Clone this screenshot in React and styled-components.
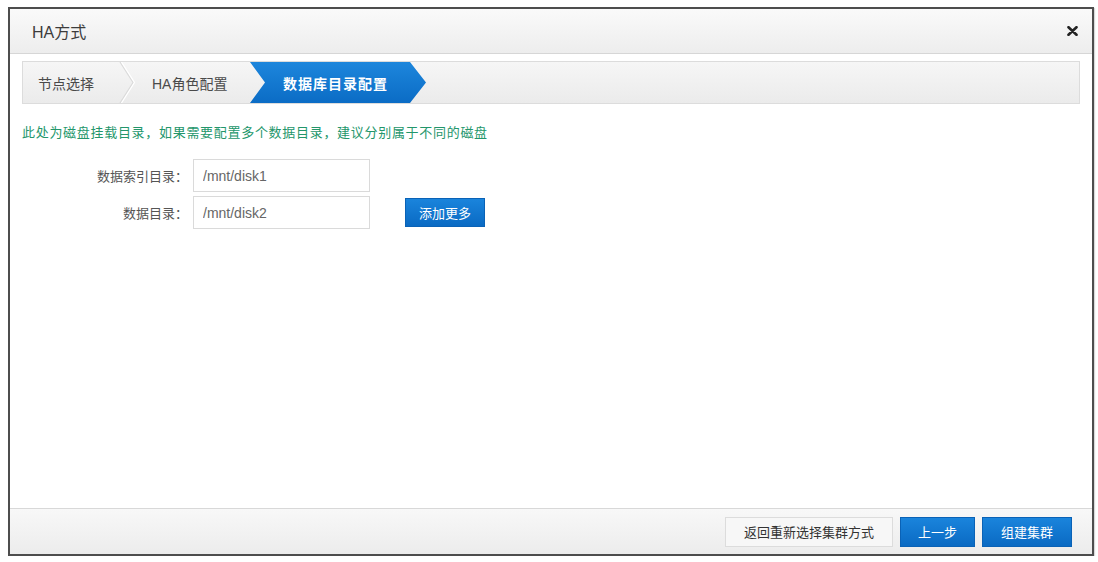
import React from 'react';
import styled, { createGlobalStyle } from 'styled-components';

const GlobalStyle = createGlobalStyle`
    html, body {
        margin: 0;
        padding: 0;
        background: #ffffff;
    }
    body {
        font-family: "Liberation Sans", "Noto Sans CJK SC", sans-serif;
        color: #444;
    }
    * {
        box-sizing: border-box;
    }
`;

const Page = styled.div`
    padding: 7px 0 0 8px;
`;

const Dialog = styled.div`
    display: flex;
    flex-direction: column;

    width: 1086px;
    height: 549px;

    background: #ffffff;
    border: 2px solid #4d4d4d;
    box-shadow: 1px 1px 1px rgba(0,0,0,.15);
`;

const Header = styled.div`
    display: flex;
    align-items: center;
    justify-content: space-between;

    height: 45px;
    padding: 0 13px 0 22px;

    background: linear-gradient(#fafafa, #ededed);
    border-bottom: 1px solid #d6d6d6;
`;

const Title = styled.h1`
    margin: 0;
    font-size: 16px;
    font-weight: normal;
    color: #3c3c3c;
`;

const CloseButton = styled.button`
    display: flex;
    align-items: center;
    justify-content: center;

    width: 14px;
    height: 14px;
    padding: 0;

    background: none;
    border: none;
    cursor: pointer;
`;

const Body = styled.div`
    flex: 1;
    padding: 7px 12px 0 12px;
`;

const StepBar = styled.div`
    display: flex;
    align-items: stretch;

    height: 43px;

    background: linear-gradient(#f6f6f6, #ebebeb);
    border: 1px solid #dcdcdc;
`;

const Step = styled.div`
    display: flex;
    align-items: center;

    width: ${p => p.$width}px;
    padding-left: ${p => p.$pad}px;

    font-size: 14px;
    color: #4a4a4a;
    white-space: nowrap;
`;

const ActiveStep = styled.div`
    display: flex;
    align-items: center;

    width: 176px;
    padding-left: 33px;

    font-size: 14px;
    font-weight: bold;
    letter-spacing: 1px;
    color: #ffffff;
    white-space: nowrap;

    background: linear-gradient(#1d86dc, #0b6cc5);
    clip-path: polygon(0 0, 160px 0, 176px 50%, 160px 100%, 0 100%, 15px 50%);
`;

const Separator = styled.svg`
    flex: none;
    width: 18px;
    height: 41px;
`;

const Hint = styled.p`
    margin: 21px 0 0 0;
    font-size: 13px;
    line-height: 16px;
    letter-spacing: 0.7px;
    color: #23966b;
`;

const Form = styled.div`
    display: grid;
    grid-template-columns: 166px 177px 1fr;
    row-gap: 4px;
    column-gap: 5px;

    margin-top: 18px;
`;

const Label = styled.label`
    grid-column: 1;
    grid-row: ${p => p.$row};
    align-self: center;

    text-align: right;
    font-size: 13px;
    color: #555;
`;

const Input = styled.input`
    grid-column: 2;
    grid-row: ${p => p.$row};
    height: 33px;
    padding: 0 9px;

    font-family: "Liberation Sans", sans-serif;
    font-size: 14px;
    color: #666;

    background: #fff;
    border: 1px solid #dadada;
    outline: none;
`;

const BlueButton = styled.button`
    height: ${p => p.$height || 30}px;
    padding: 0 ${p => p.$pad || 18}px;

    font-family: "Liberation Sans", "Noto Sans CJK SC", sans-serif;
    font-size: 13px;
    color: #ffffff;

    background: linear-gradient(#1a84dc, #0a6ac3);
    border: 1px solid #0a62b6;
    cursor: pointer;
`;

const AddButton = styled(BlueButton)`
    grid-column: 3;
    grid-row: 2;
    align-self: center;
    justify-self: start;
    margin-left: 30px;
`;

const Footer = styled.div`
    display: flex;
    align-items: center;
    justify-content: flex-end;
    gap: 7px;

    height: 46px;
    padding: 0 20px 0 0;

    background: linear-gradient(#f8f8f8, #ececec);
    border-top: 1px solid #d8d8d8;
`;

const GrayButton = styled.button`
    height: 30px;
    padding: 0 18px;

    font-family: "Liberation Sans", "Noto Sans CJK SC", sans-serif;
    font-size: 13px;
    color: #333;

    background: #f7f7f7;
    border: 1px solid #dcdcdc;
    cursor: pointer;
`;

function Chevron() {
    return (
        <Separator viewBox="0 0 18 41">
            <polyline points="2,0 15,20.5 2,41" fill="none" stroke="#dadada" strokeWidth="1.2"/>
            <polyline points="3.5,0 16.5,20.5 3.5,41" fill="none" stroke="#ffffff" strokeWidth="1.2"/>
        </Separator>
    );
}

function App() {
    return (
        <Page>
            <GlobalStyle/>
            <Dialog>
                <Header>
                    <Title>HA方式</Title>
                    <CloseButton aria-label="close">
                        <svg width="11" height="10" viewBox="0 0 11 10">
                            <path d="M1.5 1.2 L9.5 8.8 M9.5 1.2 L1.5 8.8" stroke="#222" strokeWidth="2.6" strokeLinecap="round"/>
                        </svg>
                    </CloseButton>
                </Header>

                <Body>
                    {/* STEPS */}
                    <StepBar>
                        <Step $width={95} $pad={15}>节点选择</Step>
                        <Chevron/>
                        <Step $width={114} $pad={16}>HA角色配置</Step>
                        <ActiveStep>数据库目录配置</ActiveStep>
                    </StepBar>

                    <Hint>此处为磁盘挂载目录，如果需要配置多个数据目录，建议分别属于不同的磁盘</Hint>

                    {/* DIRECTORIES */}
                    <Form>
                        <Label $row={1}>数据索引目录：</Label>
                        <Input $row={1} defaultValue="/mnt/disk1"/>
                        <Label $row={2}>数据目录：</Label>
                        <Input $row={2} defaultValue="/mnt/disk2"/>
                        <AddButton $height={29} $pad={13}>添加更多</AddButton>
                    </Form>
                </Body>

                <Footer>
                    <GrayButton>返回重新选择集群方式</GrayButton>
                    <BlueButton $pad={17}>上一步</BlueButton>
                    <BlueButton>组建集群</BlueButton>
                </Footer>
            </Dialog>
        </Page>
    );
}

export default App;
